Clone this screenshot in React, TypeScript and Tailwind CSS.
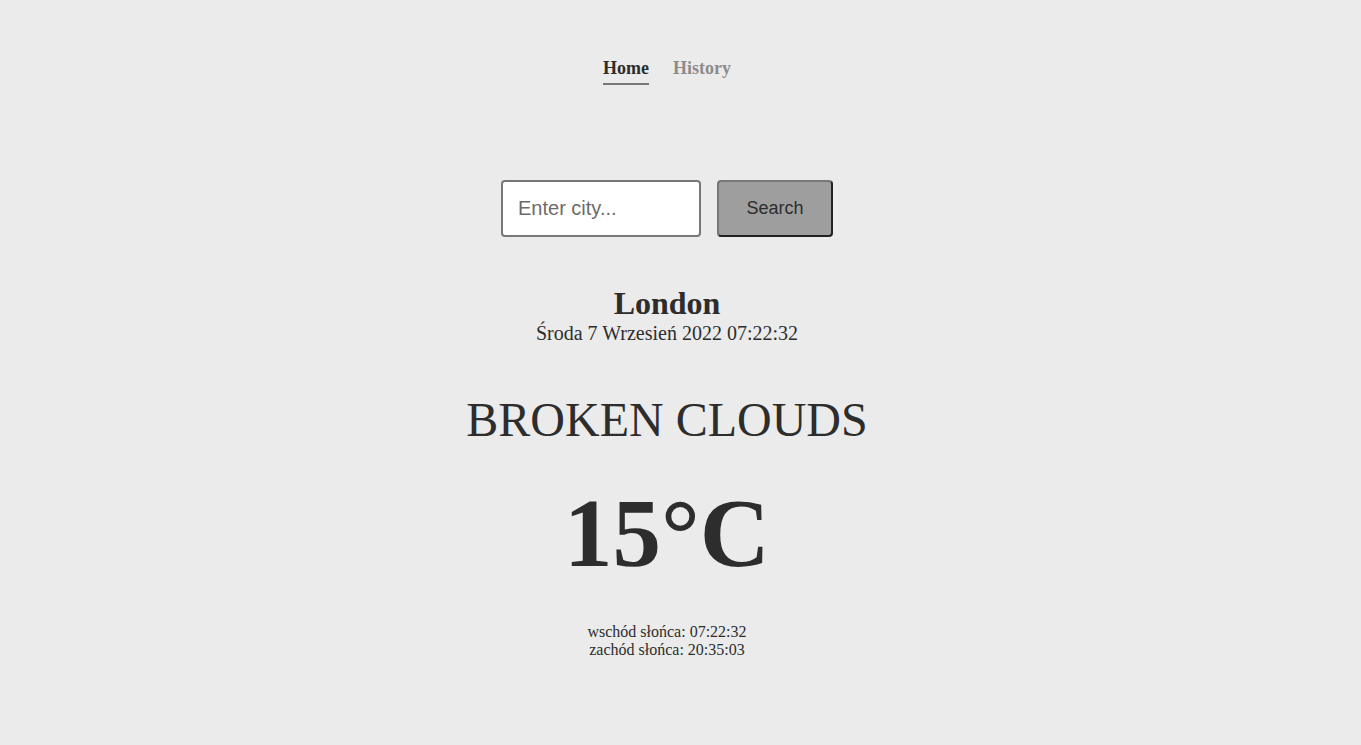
import React from "react";

const App = () => {
  return (
    <div className="min-h-[745px] bg-[#ebebeb] text-[#2d2d2d] font-['Liberation_Serif','Times_New_Roman',serif] pr-[27px]">
      <nav className="flex justify-center gap-6 pt-[57px]">
        <a className="font-bold text-[18px] leading-[22px] pb-[4px] border-b-2 border-[#777]">Home</a>
        <a className="font-bold text-[18px] leading-[22px] pb-[4px] text-[#8c8c8c]">History</a>
      </nav>

      <div className="flex flex-col items-center">
        <div className="flex gap-4 mt-[95px]">
          <input
            placeholder="Enter city..."
            className="w-[200px] h-[57px] rounded-[4px] border-2 border-[#777] bg-white px-[15px] text-[20px] font-['Liberation_Sans',Arial,sans-serif] placeholder:text-[#6b6b6b] outline-none"
          />
          <button className="w-[116px] h-[57px] rounded-[4px] border-2 border-[#777] border-r-[#222] border-b-[#222] bg-[#9e9e9e] text-[18px] text-[#2d2d2d] font-['Liberation_Sans',Arial,sans-serif]">
            Search
          </button>
        </div>

        <h1 className="mt-[48px] font-bold text-[32px] leading-[36px]">London</h1>
        <p className="text-[20px] leading-[24px]">Środa 7 Wrzesień 2022 07:22:32</p>

        <h2 className="mt-[47px] text-[48px] leading-[56px]">BROKEN CLOUDS</h2>
        <h3 className="mt-[30px] font-bold text-[97px] leading-[112px]">15°C</h3>

        <div className="mt-[33px] text-[16px] leading-[18px] text-center">
          <p>wschód słońca: 07:22:32</p>
          <p>zachód słońca: 20:35:03</p>
        </div>
      </div>
    </div>
  );
};

export default App;
